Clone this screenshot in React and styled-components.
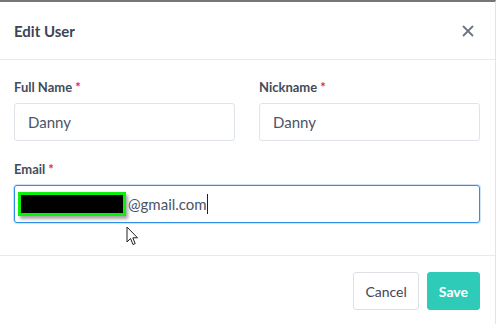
import React from 'react';
import styled, { createGlobalStyle } from 'styled-components';

const GlobalStyle = createGlobalStyle`
  html, body {
    margin: 0;
    padding: 0;
    background: #ffffff;
  }
  body {
    font-family: Lato, "Liberation Sans", sans-serif;
  }
`;

const Modal = styled.div`
  position: relative;
  width: 495px;
  height: 322px;
  border-top: 2px solid #767676;
  border-right: 1px solid #e4e4e4;
  background: #fff;
  box-sizing: content-box;
`;

const Header = styled.div`
  display: flex;
  align-items: center;
  justify-content: space-between;
  height: 57px;
  padding: 0 21px 0 14px;
  border-bottom: 1px solid #e7e9ec;
`;

const Title = styled.div`
  font-size: 15px;
  font-weight: 700;
  color: #3b4554;
`;

const Close = styled.button`
  border: none;
  background: none;
  padding: 0;
  width: 12px;
  height: 12px;
  display: flex;
  cursor: pointer;
`;

const Body = styled.div`
  padding: 18px 15px 32px 14px;
  display: flex;
  flex-direction: column;
  gap: 19px;
`;

const Row = styled.div`
  display: grid;
  grid-template-columns: 1fr 1fr;
  gap: 24px;
`;

const Field = styled.div`
  display: flex;
  flex-direction: column;
  gap: 7px;
`;

const Label = styled.label`
  font-size: 13px;
  font-weight: 700;
  line-height: 18px;
  color: #434c5b;
`;

const Req = styled.span`
  color: #e0245e;
  margin-left: 3px;
`;

const Input = styled.input`
  box-sizing: border-box;
  height: 38px;
  width: 100%;
  border: 1px solid #dfe3ea;
  border-radius: 3px;
  padding: 0 13px;
  font-family: Lato, "Liberation Sans", sans-serif;
  font-size: 15px;
  color: #4a5466;
  outline: none;
`;

const FocusBox = styled.div`
  position: relative;
  box-sizing: border-box;
  height: 38px;
  display: flex;
  align-items: center;
  border: 1px solid #2f8ee5;
  border-radius: 3px;
  box-shadow: 0 0 0 1px #cfe2f6;
  padding: 0 3px;
  font-size: 15px;
  color: #4a5466;
`;

const Redacted = styled.span`
  box-sizing: border-box;
  display: inline-block;
  width: 108px;
  height: 24px;
  background: #000;
  border: 3px solid #0bf00b;
  box-shadow: 2px 3px 3px rgba(0, 0, 0, 0.35);
  margin-right: 2px;
`;

const Caret = styled.span`
  display: inline-block;
  width: 1px;
  height: 20px;
  background: #222;
  margin-left: 0px;
`;

const Pointer = styled.svg`
  position: absolute;
  left: 111px;
  top: 40px;
`;

const Footer = styled.div`
  display: flex;
  justify-content: flex-end;
  gap: 8px;
  padding: 16px 15px 0 0;
  border-top: 1px solid #e7e9ec;
`;

const Button = styled.button`
  box-sizing: border-box;
  height: 38px;
  padding: 0 11px;
  border-radius: 3px;
  font-family: Lato, "Liberation Sans", sans-serif;
  font-size: 14px;
  font-weight: ${p => (p.$primary ? 700 : 400)};
  color: ${p => (p.$primary ? '#ffffff' : '#3d4758')};
  background: ${p => (p.$primary ? '#2dcbb8' : '#ffffff')};
  border: 1px solid ${p => (p.$primary ? '#2dcbb8' : '#dde1e7')};
  cursor: pointer;
`;

export default function App() {
  return (
    <>
      <GlobalStyle />
      <Modal>
        <Header>
          <Title>Edit User</Title>
          <Close aria-label="Close">
            <svg width="12" height="12" viewBox="0 0 12 12">
              <path d="M1.5 1.5 L10.5 10.5 M10.5 1.5 L1.5 10.5" stroke="#6b7480" strokeWidth="1.8" strokeLinecap="round" />
            </svg>
          </Close>
        </Header>
        <Body>
          <Row>
            <Field>
              <Label>Full Name<Req>*</Req></Label>
              <Input defaultValue="Danny" />
            </Field>
            <Field>
              <Label>Nickname<Req>*</Req></Label>
              <Input defaultValue="Danny" />
            </Field>
          </Row>
          <Field>
            <Label>Email<Req>*</Req></Label>
            <FocusBox>
              <Redacted />
              <span>@gmail.com</span>
              <Caret />
              <Pointer width="13" height="20" viewBox="0 0 13 20">
                <path d="M1 1 L1 16 L4.5 12.5 L7 18.5 L9.2 17.6 L6.8 11.8 L11.5 11.8 Z" fill="#fff" stroke="#222" strokeWidth="1" strokeLinejoin="round" />
              </Pointer>
            </FocusBox>
          </Field>
        </Body>
        <Footer>
          <Button>Cancel</Button>
          <Button $primary>Save</Button>
        </Footer>
      </Modal>
    </>
  );
}
